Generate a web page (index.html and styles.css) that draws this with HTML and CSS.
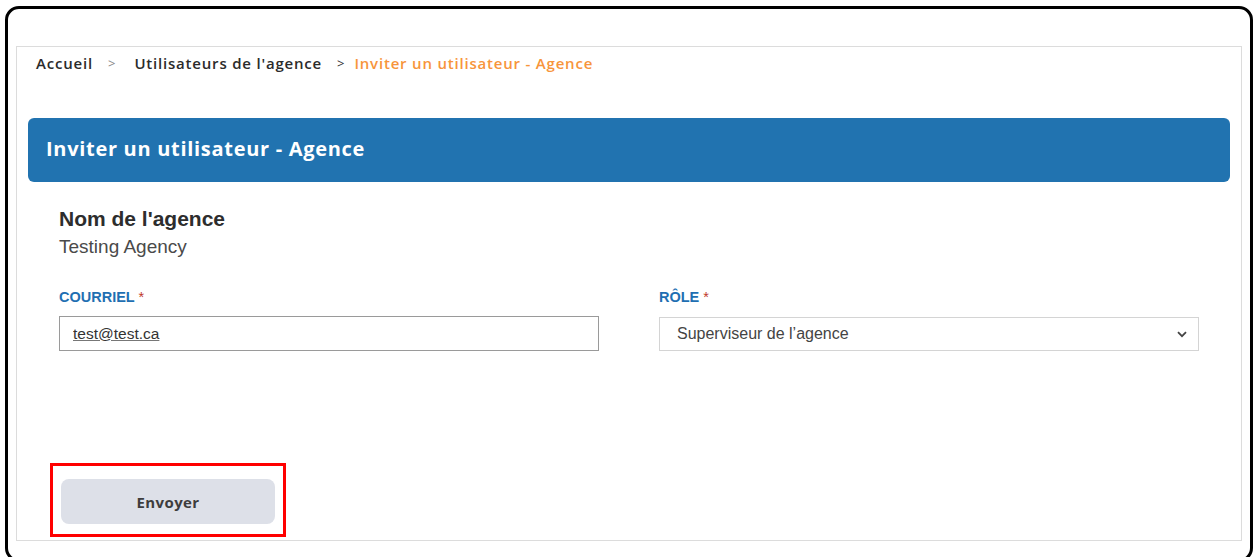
FILE: index.html
```html
<!DOCTYPE html>
<html lang="fr">
<head>
<meta charset="utf-8">
<title>Inviter un utilisateur - Agence</title>
<link rel="stylesheet" href="styles.css">
</head>
<body>
<div class="frame">
  <div class="panel">
    <nav class="breadcrumb">
      <a class="crumb" href="#">Accueil</a>
      <span class="sep">&gt;</span>
      <a class="crumb" href="#">Utilisateurs de l'agence</a>
      <span class="sep sep-dark">&gt;</span>
      <span class="crumb current">Inviter un utilisateur - Agence</span>
    </nav>

    <header class="page-head">
      <h1>Inviter un utilisateur - Agence</h1>
    </header>

    <form class="invite-form">
      <div class="agency">
        <h2>Nom de l'agence</h2>
        <p>Testing Agency</p>
      </div>

      <div class="fields">
        <div class="field">
          <label for="email">COURRIEL <span class="req">*</span></label>
          <input id="email" class="input" type="email" value="test@test.ca">
        </div>
        <div class="field">
          <label for="role">RÔLE <span class="req">*</span></label>
          <div class="select">
            <span class="select-value">Superviseur de l’agence</span>
            <svg class="chevron" width="10" height="7" viewBox="0 0 10 7"><path d="M1 1.2 5 5.2 9 1.2" fill="none" stroke="#444" stroke-width="1.8"/></svg>
          </div>
        </div>
      </div>

      <div class="actions">
        <div class="highlight">
          <button type="button" class="btn">Envoyer</button>
        </div>
      </div>
    </form>
  </div>
</div>
</body>
</html>
```

FILE: styles.css
```css
html, body {
  margin: 0;
  padding: 0;
  background: #fff;
  overflow: hidden;
}

body {
  width: 1258px;
  height: 557px;
}

.frame {
  box-sizing: border-box;
  margin: 6px 0 0 5px;
  width: 1248px;
  height: 556px;
  border: 3px solid #000;
  border-radius: 14px;
  padding: 37px 8px 0 8px;
}

.panel {
  box-sizing: border-box;
  height: 495px;
  border: 1px solid #dcdcdc;
  padding: 0 11px 0 11px;
}

.breadcrumb {
  display: flex;
  align-items: center;
  padding: 6px 0 0 8px;
  height: 20px;
  font-family: "Open Sans", sans-serif;
  font-size: 15px;
  font-weight: 600;
  line-height: 20px;
  letter-spacing: 0.8px;
}

.crumb {
  color: #2b2b2b;
  text-decoration: none;
}

.crumb.current {
  color: #f7953b;
}

.sep {
  color: #8a8a8a;
  font-weight: 500;
  font-size: 13px;
  letter-spacing: 0;
  margin: 0 19px 0 15px;
}

.sep-dark {
  color: #333;
  margin: 0 10px 0 15px;
}

.page-head {
  margin-top: 45px;
  height: 64px;
  background: #2173b0;
  border-radius: 6px;
  display: flex;
  align-items: center;
  padding: 0 0 3px 18px;
  box-sizing: border-box;
}

.page-head h1 {
  margin: 0;
  color: #fff;
  font-family: "Open Sans", sans-serif;
  font-size: 20px;
  font-weight: 700;
  letter-spacing: 0.7px;
}

.invite-form {
  padding: 0 31px 0 31px;
}

.agency h2 {
  margin: 25px 0 0 0;
  font-family: "Liberation Sans", Arial, sans-serif;
  font-size: 21px;
  line-height: 24px;
  font-weight: 700;
  color: #2d2d2d;
}

.agency p {
  margin: 5px 0 0 0;
  font-family: "Liberation Sans", Arial, sans-serif;
  font-size: 19px;
  line-height: 22px;
  color: #4a4a4a;
}

.fields {
  display: grid;
  grid-template-columns: 540px 540px;
  column-gap: 60px;
  margin-top: 30px;
}

.field label {
  display: block;
  font-family: "Liberation Sans", Arial, sans-serif;
  font-size: 14.5px;
  line-height: 18px;
  font-weight: 700;
  color: #1f6fb2;
}

.req {
  color: #c0392b;
  font-weight: 400;
}

.input {
  box-sizing: border-box;
  display: block;
  width: 540px;
  height: 35px;
  margin-top: 10px;
  border: 1px solid #9a9a9a;
  border-radius: 0;
  padding: 0 13px;
  font-family: "Liberation Sans", Arial, sans-serif;
  font-size: 15.5px;
  color: #333;
  text-decoration: underline;
  text-decoration-color: #777;
  outline: none;
}

.select {
  box-sizing: border-box;
  display: flex;
  align-items: center;
  justify-content: space-between;
  width: 540px;
  height: 34px;
  margin-top: 11px;
  border: 1px solid #d4d4d4;
  padding: 0 11px 0 17px;
  font-family: "Liberation Sans", Arial, sans-serif;
  font-size: 16px;
  color: #444;
}

.actions {
  margin-top: 112px;
  margin-left: -9px;
}

.highlight {
  display: inline-block;
  border: 3px solid #ff0000;
  padding: 13px 8px 10px 8px;
}

.btn {
  display: block;
  width: 214px;
  height: 45px;
  border: 0;
  border-radius: 8px;
  background: #dde0e8;
  font-family: "Open Sans", sans-serif;
  font-size: 15px;
  font-weight: 700;
  letter-spacing: 0.4px;
  color: #3d3d3d;
  cursor: pointer;
}
```
